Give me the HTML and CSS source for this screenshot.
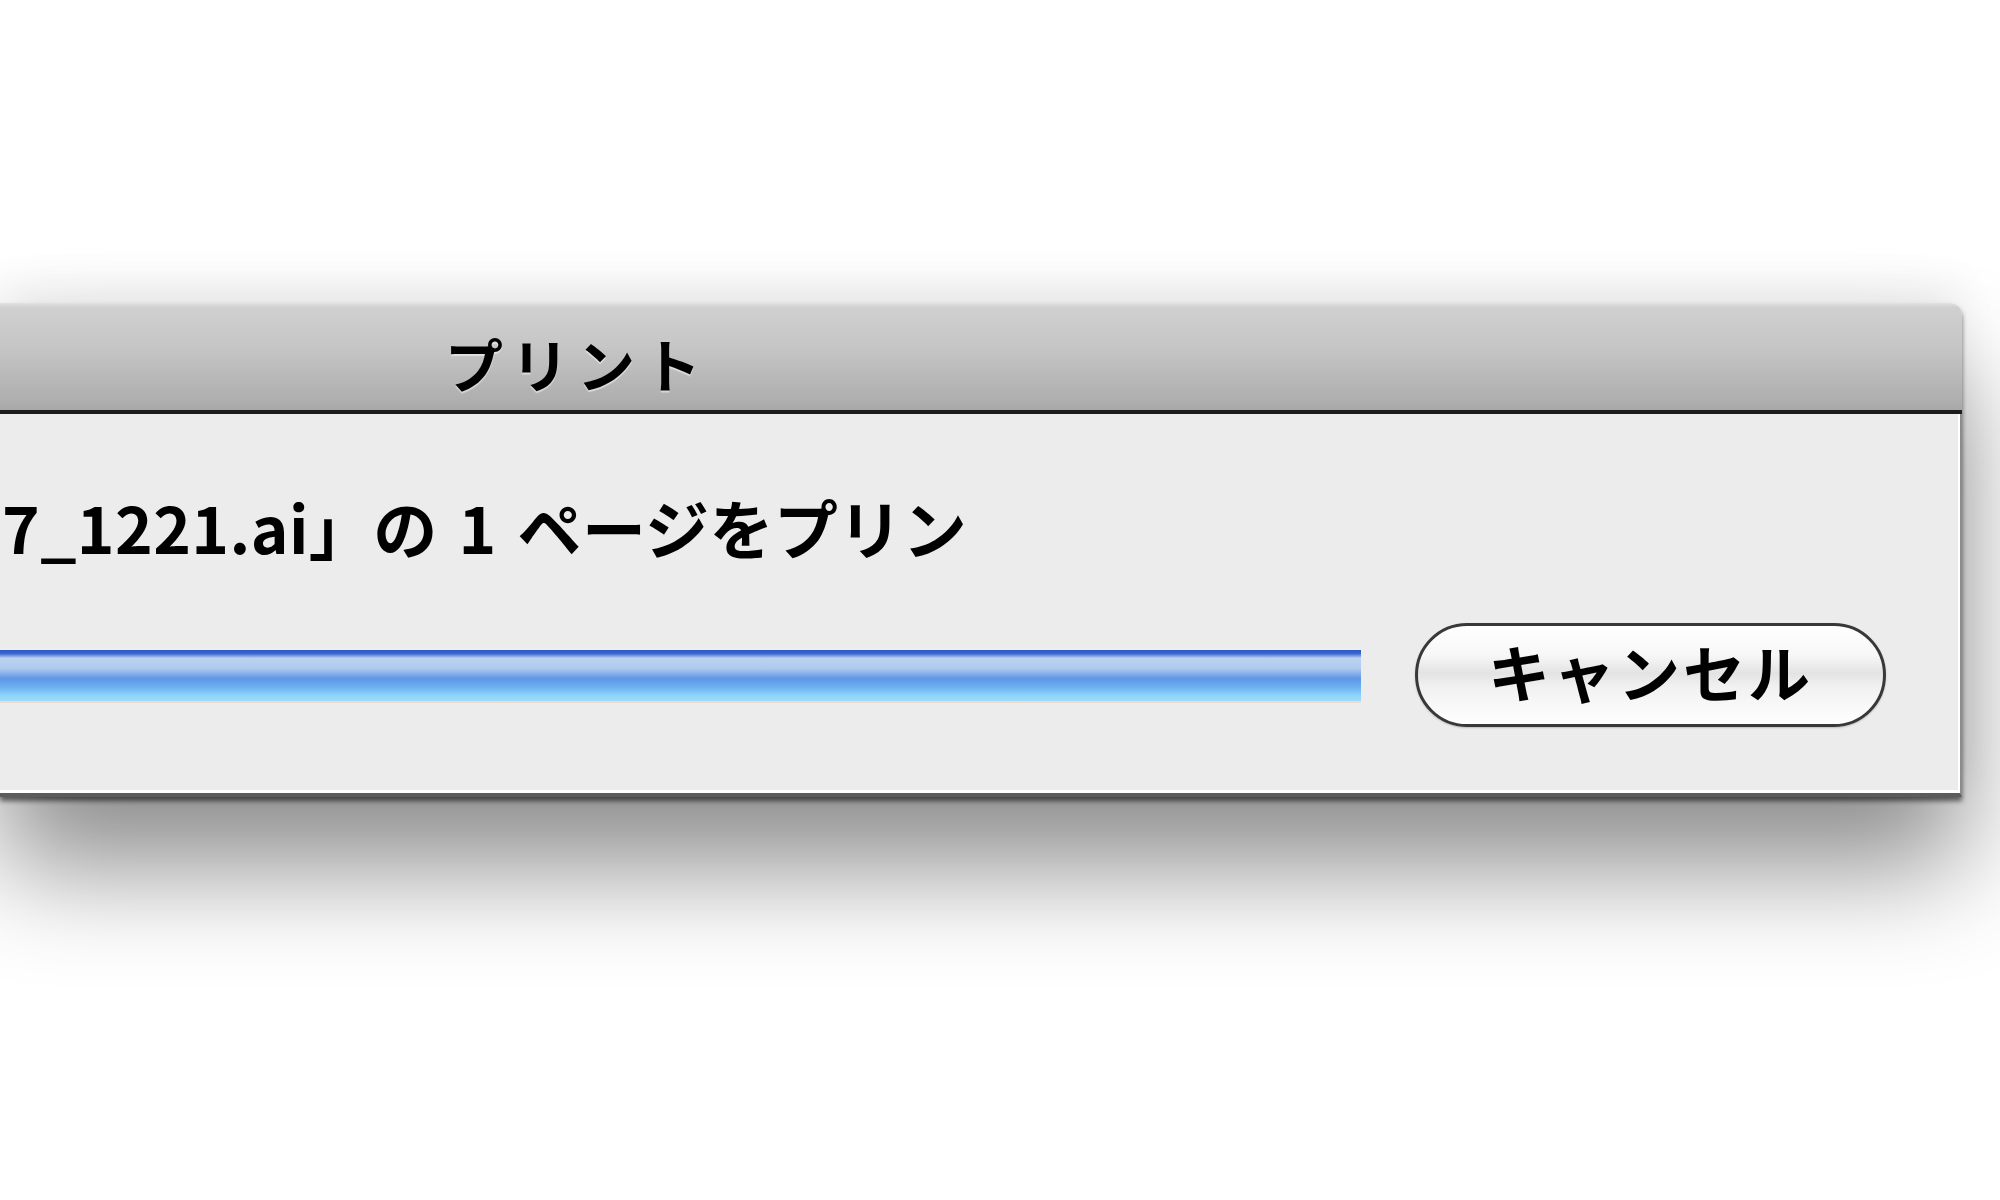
FILE: index.html
```html
<!DOCTYPE html>
<html lang="ja">
<head>
    <meta charset="UTF-8">
    <meta name="viewport" content="width=device-width, initial-scale=1.0">
    <title>プリント</title>
    <link rel="stylesheet" href="styles.css">
</head>
<body>
    <div class="stage">
        <div class="window">
            <div class="titlebar">
                <span class="title">プリント</span>
            </div>
            <div class="content">
                <p class="message">7_1221.ai」の 1 ページをプリン</p>
                <div class="progress-row">
                    <div class="progress"></div>
                    <button class="button">キャンセル</button>
                </div>
            </div>
        </div>
    </div>
</body>
</html>
```

FILE: styles.css
```css
body {
    margin: 0;
    background-color: #fff;
    overflow: hidden;
    font-family: "Noto Sans CJK JP", "Noto Sans", sans-serif;
    color: #000;
}

.stage {
    height: 1200px;
    padding-top: 303px;
    box-sizing: border-box;
}

.window {
    width: 1962px;
    border-top-right-radius: 12px;
    box-shadow: 0 70px 110px rgba(0, 0, 0, 0.45),
                0 4px 5px rgba(0, 0, 0, 0.55),
                0 -20px 40px rgba(0, 0, 0, 0.06);
}

.titlebar {
    height: 107px;
    border-top-right-radius: 12px;
    border-bottom: 4px solid #1c1c1c;
    background: linear-gradient(to bottom, #e2e2e2 0, #d0d0d0 4%, #c6c6c6 40%, #aeaeae 92%, #a8a8a8 100%);
    display: flex;
    align-items: center;
}

.title {
    width: 1154px;
    text-align: center;
    font-size: 58px;
    font-weight: bold;
    letter-spacing: 8px;
    padding-top: 12px;
    text-shadow: 0 2px 1px rgba(255, 255, 255, 0.5);
}

.content {
    background-color: #ececec;
    border-right: 2px solid #8c8c8c;
    border-bottom: 4px solid #5c5c5c;
    box-shadow: inset -2px -3px 0 #fff;
    padding: 72px 74px 66px 0;
}

.message {
    margin: 0;
    font-size: 64px;
    font-weight: bold;
    line-height: 80px;
    letter-spacing: 0.4px;
    word-spacing: 6px;
    white-space: nowrap;
    padding-left: 2px;
}

.progress-row {
    display: flex;
    align-items: center;
    justify-content: space-between;
    margin-top: 57px;
}

.progress {
    width: 1361px;
    height: 51px;
    background: linear-gradient(to bottom, #2c58c8 0, #3a66d0 7%, #bcd2ee 16%, #aecbee 36%, #5f97e6 56%, #6bafef 72%, #8ed5fb 90%, #a0dafa 100%);
    box-shadow: 0 2px 0 #e9ddd0, 0 -1px 0 #f4f0e6;
}

.button {
    width: 471px;
    height: 104px;
    border: 3px solid #383838;
    border-radius: 52px;
    background: linear-gradient(to bottom, #ffffff 0, #f7f7f7 30%, #e3e3e3 48%, #f1f1f1 62%, #ffffff 100%);
    font-family: "Noto Sans CJK JP", "Noto Sans", sans-serif;
    font-size: 62px;
    font-weight: bold;
    letter-spacing: 3px;
    color: #000;
    padding: 0 0 8px;
    box-shadow: 0 1px 2px rgba(0, 0, 0, 0.2);
}
```
